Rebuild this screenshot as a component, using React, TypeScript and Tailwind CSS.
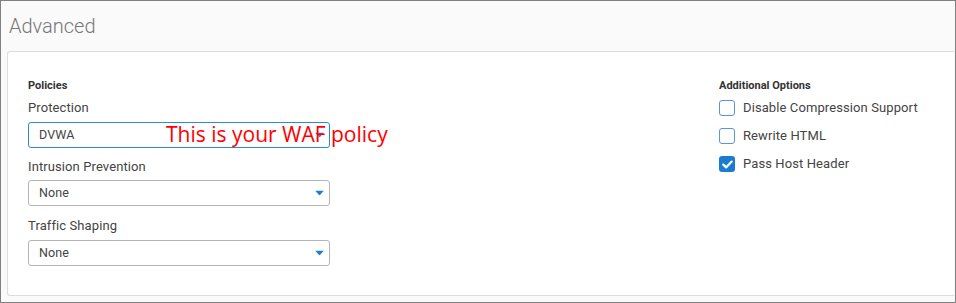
import React from 'react';

const Caret = () => (
  <svg width="9" height="5" viewBox="0 0 9 5" className="absolute right-[5px] top-1/2 -translate-y-1/2">
    <path d="M0 0h9L4.5 5z" fill="#1f7fce" />
  </svg>
);

const SelectBox: React.FC<{ value: string; focused?: boolean }> = ({ value, focused }) => (
  <div
    className={`relative w-[302px] h-[26px] rounded-[3px] bg-white flex items-center pl-[10px] text-[12.5px] text-[#444] tracking-[0.1px] ${
      focused ? 'border border-[#2b8ad6]' : 'border border-[#b5b5b5]'
    }`}
  >
    {value}
    <Caret />
  </div>
);

const CheckBox: React.FC<{ label: string; checked?: boolean }> = ({ label, checked }) => (
  <div className="flex items-center gap-[8px] h-[16px]">
    {checked ? (
      <div className="w-[16px] h-[16px] rounded-[3px] bg-[#1a7bd0] flex items-center justify-center">
        <svg width="11" height="9" viewBox="0 0 11 9">
          <path d="M1.3 4.6l2.8 2.8L9.7 1.6" stroke="#fff" strokeWidth="2.2" fill="none" strokeLinecap="round" strokeLinejoin="round" />
        </svg>
      </div>
    ) : (
      <div className="w-[16px] h-[16px] rounded-[3px] border-[1.5px] border-[#5a93d6] bg-white" />
    )}
    <span className="text-[13px] text-[#444] tracking-[0.1px]">{label}</span>
  </div>
);

export default function App() {
  return (
    <div
      className="w-[956px] h-[303px] border border-[#808080] bg-[#fafafa] flex flex-col pl-[6px] pr-[1px] pb-[6px]"
      style={{ fontFamily: 'Roboto, "Noto Sans", sans-serif' }}
    >
      <div className="h-[50px] pt-[10px] pl-[2px] text-[20px] font-light text-[#777] leading-[30px]">Advanced</div>
      <div className="flex-1 bg-white border border-r-0 border-[#dcdcdc] rounded-l-[3px] flex pt-[27px] pl-[20px]">
        <div className="w-[690px] flex flex-col">
          <div className="text-[11px] font-bold text-[#333] leading-[14px]">Policies</div>
          <div className="text-[13px] text-[#444] mt-[7px] leading-[16px] tracking-[0.1px]">Protection</div>
          <div className="relative mt-[6px]">
            <SelectBox value="DVWA" focused />
            <span
              className="absolute left-[138px] top-[-2px] text-[21px] text-[#ff0000] leading-[28px] whitespace-nowrap"
              style={{ fontFamily: '"Open Sans", sans-serif' }}
            >
              This is your WAF policy
            </span>
          </div>
          <div className="text-[13px] text-[#444] mt-[11px] leading-[16px] tracking-[0.1px]">Intrusion Prevention</div>
          <div className="mt-[5px]">
            <SelectBox value="None" />
          </div>
          <div className="text-[13px] text-[#444] mt-[12px] leading-[16px] tracking-[0.1px]">Traffic Shaping</div>
          <div className="mt-[6px]">
            <SelectBox value="None" />
          </div>
        </div>
        <div className="flex flex-col">
          <div className="text-[11px] font-bold text-[#333] leading-[14px] pl-[1px]">Additional Options</div>
          <div className="flex flex-col gap-[12px] mt-[7px] pl-[1px]">
            <CheckBox label="Disable Compression Support" />
            <CheckBox label="Rewrite HTML" />
            <CheckBox label="Pass Host Header" checked />
          </div>
        </div>
      </div>
    </div>
  );
}
